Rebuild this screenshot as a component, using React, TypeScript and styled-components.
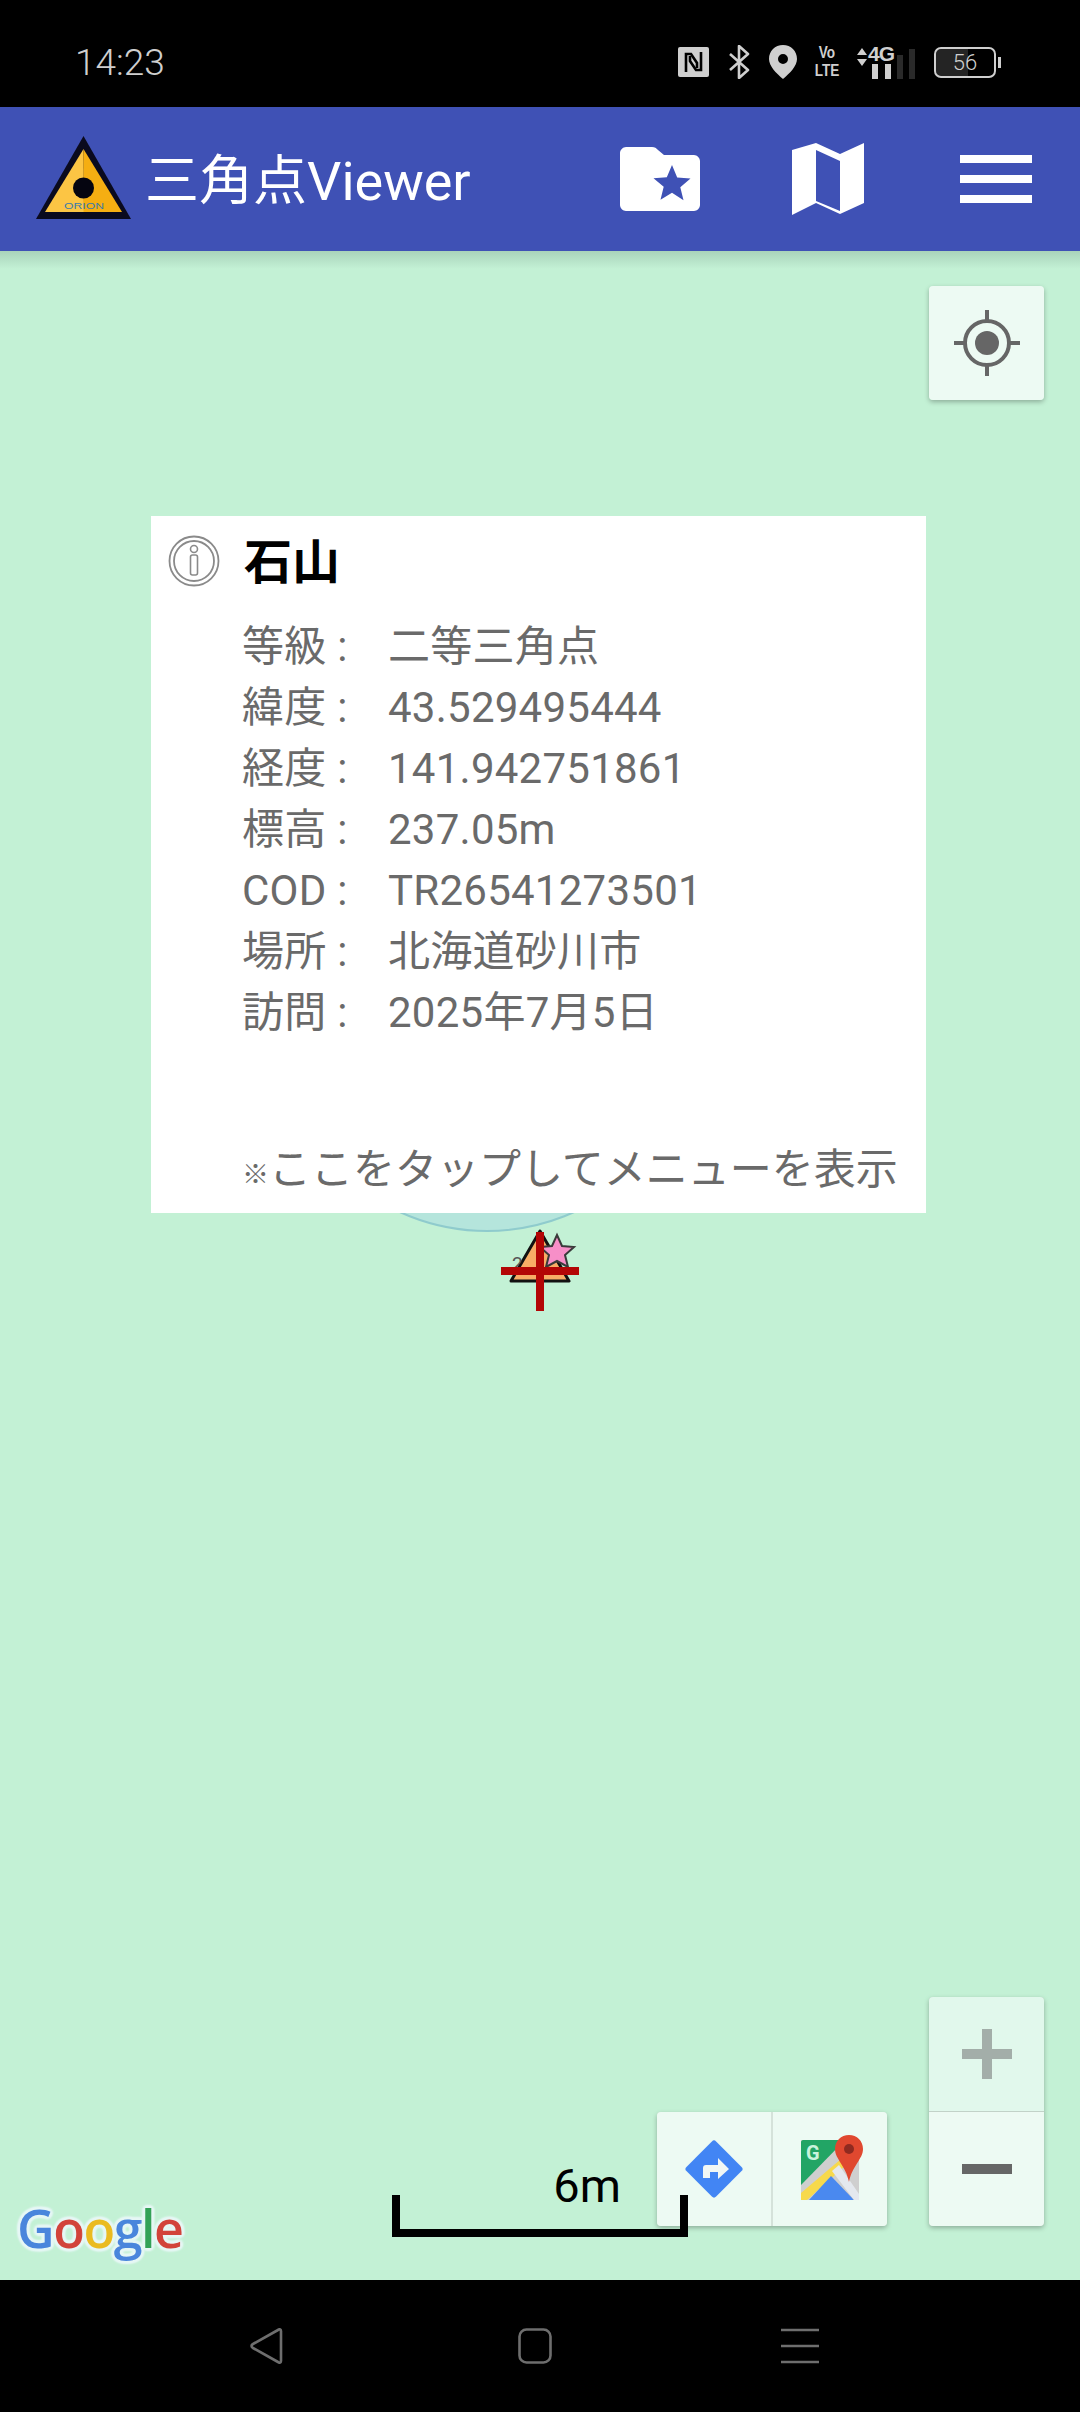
import React from "react";
import styled, { createGlobalStyle } from "styled-components";

const GlobalStyle = createGlobalStyle`
  html, body {
    margin: 0;
    padding: 0;
    background: #000;
  }
  * {
    box-sizing: border-box;
  }
`;

const FONT = `Roboto, "Noto Sans CJK JP", sans-serif`;

const Screen = styled.div`
  display: flex;
  flex-direction: column;
  width: 1080px;
  height: 2412px;
  overflow: hidden;
  font-family: ${FONT};
`;

const StatusBar = styled.div`
  display: flex;
  align-items: center;
  justify-content: space-between;
  height: 107px;
  flex: none;
  padding: 17px 79px 0 75px;
  background: #000;
  color: #cfcfcf;
`;

const Time = styled.span`
  font-size: 37px;
  font-weight: 300;
`;

const StatusIcons = styled.div`
  display: flex;
  align-items: center;
  gap: 19px;
`;

const VoLte = styled.div`
  display: flex;
  flex-direction: column;
  align-items: center;
  width: 22px;
  font-family: "Liberation Sans", sans-serif;
  font-weight: 700;
  font-size: 16px;
  line-height: 18.5px;
  transform: scaleX(0.85);
`;

const Signal = styled.div`
  position: relative;
  width: 58px;
  height: 34px;
`;

const SignalArrows = styled.svg`
  position: absolute;
  left: 0;
  top: 3px;
`;

const FourG = styled.span`
  position: absolute;
  left: 11px;
  top: -2px;
  font-family: "Liberation Sans", sans-serif;
  font-weight: 700;
  font-size: 21px;
  line-height: 21px;
  letter-spacing: -1px;
`;

const SignalBar = styled.i<{ $x: number; $h: number; $dim?: boolean }>`
  position: absolute;
  bottom: 0;
  left: ${(p) => p.$x}px;
  width: 6px;
  height: ${(p) => p.$h}px;
  background: ${(p) => (p.$dim ? "#2a2a2a" : "#cfcfcf")};
`;

const Battery = styled.div`
  position: relative;
  display: flex;
  align-items: center;
  justify-content: center;
  width: 62px;
  height: 31px;
  border: 2px solid #cfcfcf;
  border-radius: 7px;
  font-size: 22px;
  font-weight: 300;
  background: linear-gradient(90deg, #242424 56%, #000 56%);
  background-clip: padding-box;
  margin-right: 5px;

  &::after {
    content: "";
    position: absolute;
    right: -7px;
    top: 8px;
    width: 3px;
    height: 11px;
    background: #cfcfcf;
  }
`;

const AppBar = styled.header`
  display: flex;
  align-items: center;
  height: 144px;
  flex: none;
  padding: 0 48px 0 36px;
  background: #3f51b5;
  color: #fff;
`;

const Logo = styled.svg`
  flex: none;
  margin: -3px 14px 0 0;
`;

const Title = styled.h1`
  flex: 1;
  margin: 6px 0 0;
  font-size: 54px;
  font-weight: 400;
  line-height: 1;
`;

const BarIcons = styled.div`
  display: flex;
  align-items: center;
  gap: 92px;
`;

const FoldedMapSvg = styled.svg`
  margin-bottom: 5px;
`;

const Burger = styled.div`
  display: flex;
  flex-direction: column;
  gap: 12px;
  width: 72px;
  margin-left: 4px;

  span {
    display: block;
    height: 8px;
    background: #fff;
  }
`;

const MapArea = styled.main`
  position: relative;
  flex: 1;
  overflow: hidden;
  background: #c3f1d5;

  &::before {
    content: "";
    position: absolute;
    inset: 0 0 auto 0;
    height: 18px;
    background: linear-gradient(#a9d3ba, #c3f1d5);
  }
`;

const AccuracyCircle = styled.div`
  position: absolute;
  left: 276px;
  top: 559px;
  width: 422px;
  height: 422px;
  border-radius: 50%;
  border: 2px solid #8fcbcd;
  background: #b5e5dc;
`;

const MarkerSvg = styled.svg`
  position: absolute;
  left: 490px;
  top: 975px;
`;

const InfoCard = styled.section`
  position: absolute;
  left: 151px;
  top: 265px;
  display: flex;
  flex-direction: column;
  width: 775px;
  height: 697px;
  padding: 18px 20px 0 17px;
  background: #fff;
  color: #6a6a6a;
`;

const CardHead = styled.div`
  display: flex;
  align-items: center;
  gap: 24px;
  height: 54px;
  margin-bottom: 28px;
`;

const CardTitle = styled.h2`
  margin: 4px 0 0;
  color: #000;
  font-size: 48px;
  font-weight: 700;
  line-height: 1;
`;

const Rows = styled.div`
  display: grid;
  grid-template-columns: 146px 1fr;
  grid-auto-rows: 61px;
  padding-left: 74px;
  font-size: 42px;
  line-height: 61px;
  letter-spacing: 0.25px;
`;

const Hint = styled.div`
  margin: auto 0 0 74px;
  padding-bottom: 7px;
  font-size: 42px;
  line-height: 61px;
  white-space: nowrap;
`;

const HintMark = styled.span`
  display: inline-block;
  width: 27px;
  font-size: 27px;
  font-weight: 700;
`;

const MapButton = styled.div<{ $tone?: string }>`
  display: flex;
  align-items: center;
  justify-content: center;
  width: 115px;
  height: 114px;
  background: ${(p) => p.$tone || "#edfaf3"};
`;

const FloatPanel = styled.div`
  position: absolute;
  display: flex;
  border-radius: 4px;
  overflow: hidden;
  box-shadow: 0 2px 5px rgba(0, 0, 0, 0.28);
`;

const LocatePanel = styled(FloatPanel)`
  right: 36px;
  top: 35px;
`;

const ZoomPanel = styled(FloatPanel)`
  right: 36px;
  bottom: 54px;
  flex-direction: column;
  gap: 1px;
  background: #c2d2c8;
`;

const RoutePanel = styled(FloatPanel)`
  left: 657px;
  bottom: 54px;
  gap: 2px;
  background: #d5e2da;

  ${MapButton} {
    width: 114px;
  }
`;

const MapsSvg = styled.svg`
  margin-left: 6px;
`;

const GoogleMark = styled.div`
  position: absolute;
  left: 17px;
  bottom: 20px;
  font-family: "Open Sans", sans-serif;
  font-size: 52px;
  font-weight: 600;
  line-height: 64px;
  letter-spacing: -1.5px;
  text-shadow: 3px 0 2px #e6f7f5, -3px 0 2px #e6f7f5, 0 3px 2px #e6f7f5, 0 -3px 2px #e6f7f5,
    2px 2px 2px #e6f7f5, -2px 2px 2px #e6f7f5, 2px -2px 2px #e6f7f5, -2px -2px 2px #e6f7f5;
`;

const GoogleLetter = styled.span<{ $c: string }>`
  color: ${(p) => p.$c};
`;

const ScaleBar = styled.div`
  position: absolute;
  left: 392px;
  bottom: 43px;
  width: 296px;
  height: 42px;
  border: 8px solid #000;
  border-top: 0;
`;

const ScaleLabel = styled.span`
  position: absolute;
  right: 59px;
  bottom: 20px;
  color: #000;
  font-size: 47px;
  line-height: 1;
`;

const NavBar = styled.nav`
  display: flex;
  align-items: center;
  gap: 234px;
  height: 132px;
  flex: none;
  padding-left: 250px;
  background: #000;
`;

const NavMenu = styled.svg`
  margin-left: -5px;
`;

function NfcIcon() {
  return (
    <svg width="31" height="30" viewBox="0 0 31 30">
      <rect width="31" height="30" rx="2" fill="#cfcfcf" />
      <path d="M8 25V7h5l6 9v5" fill="none" stroke="#000" strokeWidth="2.6" />
      <path d="M23 5v18h-5l-6-9V9" fill="none" stroke="#000" strokeWidth="2.6" />
    </svg>
  );
}

function BluetoothIcon() {
  return (
    <svg width="22" height="34" viewBox="0 0 22 34">
      <path
        d="M2 9l18 16-9 8V1l9 8L2 25"
        fill="none"
        stroke="#cfcfcf"
        strokeWidth="2.6"
        strokeLinejoin="round"
      />
    </svg>
  );
}

function PinIcon() {
  return (
    <svg width="28" height="34" viewBox="0 0 28 34">
      <path
        fillRule="evenodd"
        d="M14 0c8 0 14 6 14 14 0 7-7 14-14 20C7 28 0 21 0 14 0 6 6 0 14 0zm0 9a5 5 0 100 10 5 5 0 000-10z"
        fill="#cfcfcf"
      />
    </svg>
  );
}

function OrionLogo() {
  return (
    <Logo width="95" height="83" viewBox="0 0 95 83">
      <path d="M47.5 0L95 83H0z" fill="#0a0a1e" />
      <path d="M47.5 13L9 76h39z" fill="#fcc544" />
      <path d="M47.5 13L86 76H47.5z" fill="#f5ae12" />
      <circle cx="47.5" cy="52" r="10.5" fill="#050510" />
      <text
        x="28"
        y="73"
        textLength="40"
        lengthAdjust="spacingAndGlyphs"
        fontFamily="Liberation Sans, sans-serif"
        fontSize="9"
        fill="#3a7ba8"
      >
        ORION
      </text>
    </Logo>
  );
}

function FolderStarIcon() {
  return (
    <svg width="80" height="64" viewBox="0 0 80 64">
      <path
        d="M6 0h26c3 0 4 1 6 3l6 5h30c3 0 6 3 6 6v44c0 3-3 6-6 6H6c-3 0-6-3-6-6V6c0-3 3-6 6-6z"
        fill="#fff"
      />
      <path
        d="M52 18l5.2 12.6 13.3 1-10.2 8.6 3.2 13L52 45.800l-11.500 7 3.200-13-10.200-8.600 13.300-1z"
        fill="#3f51b5"
      />
    </svg>
  );
}

function FoldedMapIcon() {
  return (
    <FoldedMapSvg width="72" height="77" viewBox="0 0 72 77">
      <path
        fillRule="evenodd"
        d="M0 12L24 5l24 11 24-11v60L48 76 24 65 0 77zM24 12v51l24 10V23z"
        fill="#fff"
      />
    </FoldedMapSvg>
  );
}

function LocateIcon() {
  return (
    <svg width="66" height="66" viewBox="0 0 66 66" fill="none">
      <circle cx="33" cy="33" r="22" stroke="#666" strokeWidth="4" />
      <circle cx="33" cy="33" r="12" fill="#666" />
      <path d="M33 0v10M33 56v10M0 33h10M56 33h10" stroke="#666" strokeWidth="4" />
    </svg>
  );
}

function InfoIcon() {
  return (
    <svg width="52" height="52" viewBox="0 0 52 52" fill="none" stroke="#8a8a8a">
      <circle cx="26" cy="26" r="24.500" strokeWidth="1.800" />
      <circle cx="26" cy="26" r="20" strokeWidth="1.800" />
      <rect x="22.500" y="20" width="7" height="20" rx="2" strokeWidth="1.600" />
      <circle cx="26" cy="14" r="3.500" strokeWidth="1.600" />
    </svg>
  );
}

function Marker() {
  return (
    <MarkerSvg width="100" height="90" viewBox="0 0 100 90">
      <path d="M50 5L79 55H21z" fill="#f8ad66" stroke="#111" strokeWidth="3" strokeLinejoin="round" />
      <circle cx="49" cy="36" r="3" fill="#333" />
      <text x="22" y="44" fontFamily="Roboto, sans-serif" fontSize="19" fill="#555">
        2
      </text>
      <path
        d="M67 9l5 11 12 1-9 8 3 12-11-6-11 6 3-12-9-8 12-1z"
        fill="#f78fc8"
        stroke="#3a3a3a"
        strokeWidth="2"
      />
      <path d="M46 6h8v79h-8zM11 41h78v8H11z" fill="#b30606" />
    </MarkerSvg>
  );
}

function DirectionsIcon() {
  return (
    <svg width="60" height="60" viewBox="0 0 60 60">
      <rect x="9" y="9" width="42" height="42" rx="3" transform="rotate(45 30 30)" fill="#4285f4" />
      <path d="M19 39V29c0-2 1-3 3-3h12v-7l11 11-11 10v-7H26v6z" fill="#f1f7f4" />
    </svg>
  );
}

function GoogleMapsIcon() {
  return (
    <MapsSvg width="68" height="68" viewBox="0 0 68 68">
      <path d="M2 5h58v60H2z" fill="#cfcfcf" />
      <path d="M4 5h42L2 50V7c0-1 1-2 2-2z" fill="#22a565" />
      <path d="M42 24L2 58v7h6l38-34z" fill="#f7d94c" />
      <path d="M10 65l22-24 23 24z" fill="#4a89ef" />
      <path d="M33 36l7-6 20 29v6h-5z" fill="#e4e8ee" />
      <text x="7" y="25" fontFamily="Roboto, sans-serif" fontSize="20" fontWeight="700" fill="#c9f3dc">
        G
      </text>
      <path d="M50 0c8 0 14 6 14 14 0 10-11 17-14 33-3-16-14-23-14-33C36 6 42 0 50 0z" fill="#e0482f" />
      <circle cx="50" cy="14" r="5" fill="#8f2a20" />
    </MapsSvg>
  );
}

const details: [string, string][] = [
  ["等級 :", "二等三角点"],
  ["緯度 :", "43.529495444"],
  ["経度 :", "141.942751861"],
  ["標高 :", "237.05m"],
  ["COD :", "TR26541273501"],
  ["場所 :", "北海道砂川市"],
  ["訪問 :", "2025年7月5日"],
];

const googleLetters: [string, string][] = [
  ["G", "#4a86dc"],
  ["o", "#d2433a"],
  ["o", "#eabb20"],
  ["g", "#4a86dc"],
  ["l", "#33a257"],
  ["e", "#d2433a"],
];

export default function App() {
  return (
    <Screen>
      <GlobalStyle />
      <StatusBar>
        <Time>14:23</Time>
        <StatusIcons>
          <NfcIcon />
          <BluetoothIcon />
          <PinIcon />
          <VoLte>
            <span>Vo</span>
            <span>LTE</span>
          </VoLte>
          <Signal>
            <SignalArrows width="10" height="18" viewBox="0 0 10 18">
              <path d="M5 0l5 7H0zM5 18l5-7H0z" fill="#cfcfcf" />
            </SignalArrows>
            <FourG>4G</FourG>
            <SignalBar $x={15} $h={15} />
            <SignalBar $x={28} $h={15} />
            <SignalBar $x={40} $h={24} $dim />
            <SignalBar $x={52} $h={30} $dim />
          </Signal>
          <Battery>56</Battery>
        </StatusIcons>
      </StatusBar>

      <AppBar>
        <OrionLogo />
        <Title>三角点Viewer</Title>
        <BarIcons>
          <FolderStarIcon />
          <FoldedMapIcon />
          <Burger>
            <span />
            <span />
            <span />
          </Burger>
        </BarIcons>
      </AppBar>

      <MapArea>
        <AccuracyCircle />
        <Marker />
        <InfoCard>
          <CardHead>
            <InfoIcon />
            <CardTitle>石山</CardTitle>
          </CardHead>
          <Rows>
            {details.map(([label, value]) => (
              <React.Fragment key={label}>
                <span>{label}</span>
                <span>{value}</span>
              </React.Fragment>
            ))}
          </Rows>
          <Hint>
            <HintMark>※</HintMark>ここをタップしてメニューを表示
          </Hint>
        </InfoCard>

        <LocatePanel>
          <MapButton>
            <LocateIcon />
          </MapButton>
        </LocatePanel>

        <RoutePanel>
          <MapButton>
            <DirectionsIcon />
          </MapButton>
          <MapButton>
            <GoogleMapsIcon />
          </MapButton>
        </RoutePanel>

        <ZoomPanel>
          <MapButton $tone="#e1f8ec">
            <svg width="50" height="50" viewBox="0 0 50 50">
              <path d="M20 0h10v20h20v10H30v20H20V30H0V20h20z" fill="#a3aea9" />
            </svg>
          </MapButton>
          <MapButton>
            <svg width="50" height="10" viewBox="0 0 50 10">
              <path d="M0 0h50v10H0z" fill="#666" />
            </svg>
          </MapButton>
        </ZoomPanel>

        <GoogleMark>
          {googleLetters.map(([ch, color], i) => (
            <GoogleLetter key={i} $c={color}>
              {ch}
            </GoogleLetter>
          ))}
        </GoogleMark>

        <ScaleBar>
          <ScaleLabel>6m</ScaleLabel>
        </ScaleBar>
      </MapArea>

      <NavBar>
        <svg width="34" height="36" viewBox="0 0 34 36" fill="none">
          <path
            d="M31 3v30c0 2-2 2-3 1L3 20c-2-1-2-3 0-4L28 2c1-1 3-1 3 1z"
            stroke="#6e6e6e"
            strokeWidth="2.600"
            strokeLinejoin="round"
          />
        </svg>
        <svg width="34" height="36" viewBox="0 0 34 36" fill="none">
          <rect x="1.500" y="1.500" width="31" height="33" rx="7" stroke="#6e6e6e" strokeWidth="2.600" />
        </svg>
        <NavMenu width="38" height="36" viewBox="0 0 38 36">
          <path d="M0 2h38M0 18h38M0 34h38" stroke="#6e6e6e" strokeWidth="2.600" />
        </NavMenu>
      </NavBar>
    </Screen>
  );
}
